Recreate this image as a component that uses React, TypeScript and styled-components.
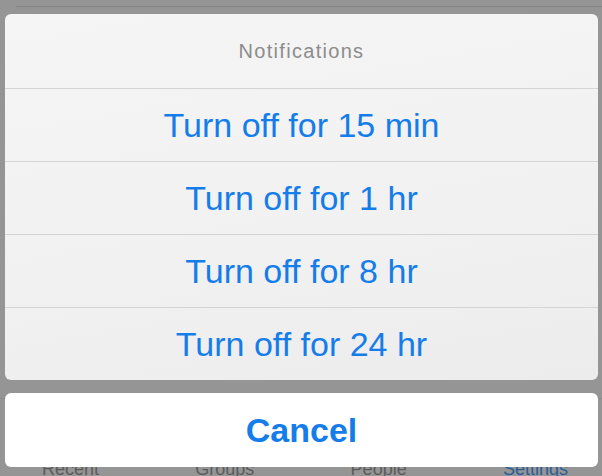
import React from "react";
import styled, { createGlobalStyle } from "styled-components";

const GlobalStyle = createGlobalStyle`
  html, body {
    margin: 0;
    padding: 0;
  }
  body {
    font-family: "Liberation Sans", Arial, sans-serif;
  }
`;

const Screen = styled.div`
  position: relative;
  width: 602px;
  height: 476px;
  overflow: hidden;
  background: #959595;
`;

// what lies under the dimmed overlay
const Backdrop = styled.div`
  display: flex;
  flex-direction: column;
  height: 100%;
`;

const TopRule = styled.div`
  margin: 6px 0 0 16px;
  height: 1px;
  background: #848484;
`;

const TabBar = styled.nav`
  margin-top: auto;
  height: 77px;
  border-top: 1px solid #8a8a8a;
  display: flex;
  align-items: flex-end;
  justify-content: space-between;
  padding: 0 34px 0 42px;
`;

type TabProps = {
  active?: boolean;
};
const TabLabel = styled.span<TabProps>`
  font-size: 18px;
  line-height: 18px;
  margin-bottom: -2px;
  color: ${(props) => (props.active ? "#2b5e97" : "#5c5c5c")};
`;

const Overlay = styled.div`
  position: absolute;
  inset: 0;
  padding: 14px 4px 0 5px;
  display: flex;
  flex-direction: column;
  gap: 13px;
`;

const Sheet = styled.div`
  border-radius: 6px;
  overflow: hidden;
  background: linear-gradient(170deg, #f5f5f5 0%, #f1f1f1 60%, #ececec 100%);
`;

const Title = styled.div`
  height: 74px;
  display: flex;
  align-items: center;
  justify-content: center;
  font-size: 20px;
  letter-spacing: 1.3px;
  color: #8c8c8c;
`;

const Option = styled.button`
  display: flex;
  width: 100%;
  height: 73px;
  align-items: center;
  justify-content: center;
  border: 0;
  border-top: 1px solid #d4d4d4;
  background: transparent;
  padding: 0;
  font-family: inherit;
  font-size: 34px;
  color: #157de9;
  cursor: pointer;
`;

const CancelButton = styled(Option)`
  height: 74px;
  border-top: 0;
  border-radius: 6px;
  background: #ffffff;
  font-weight: bold;
`;

const options = [
  "Turn off for 15 min",
  "Turn off for 1 hr",
  "Turn off for 8 hr",
  "Turn off for 24 hr",
];

const tabs = ["Recent", "Groups", "People", "Settings"];

function App() {
  return (
    <Screen>
      <GlobalStyle />
      <Backdrop>
        <TopRule />
        <TabBar>
          {tabs.map((t) => (
            <TabLabel key={t} active={t === "Settings"}>
              {t}
            </TabLabel>
          ))}
        </TabBar>
      </Backdrop>
      <Overlay>
        <Sheet>
          <Title>Notifications</Title>
          {options.map((o) => (
            <Option key={o}>{o}</Option>
          ))}
        </Sheet>
        <CancelButton>Cancel</CancelButton>
      </Overlay>
    </Screen>
  );
}

export default App;
